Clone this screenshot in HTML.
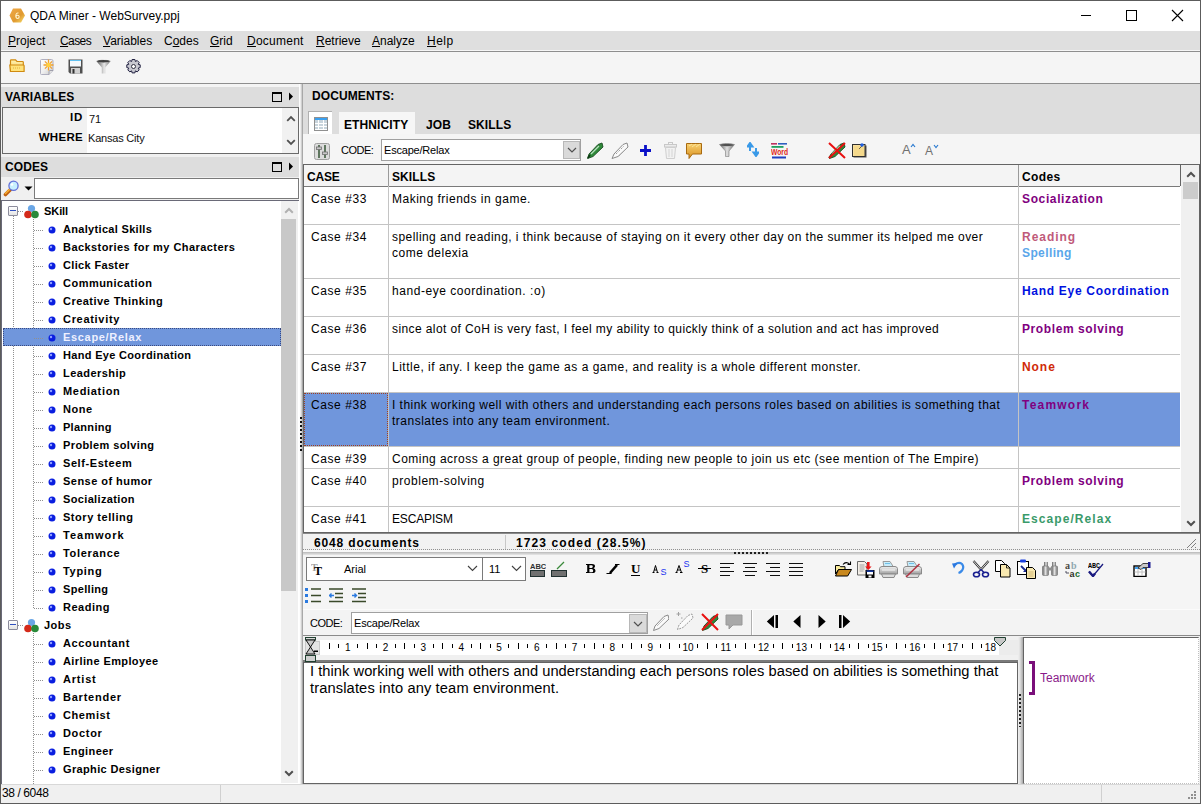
<!DOCTYPE html>
<html><head><meta charset="utf-8">
<style>
*{margin:0;padding:0;box-sizing:border-box}
html,body{width:1201px;height:804px;overflow:hidden;background:#f0f0f0;font-family:"Liberation Sans",sans-serif;color:#000}
.a{position:absolute}
.t{position:absolute;white-space:pre;line-height:1}
.hdt{position:absolute;font-weight:bold;font-size:12px;letter-spacing:0.1px;line-height:1;white-space:pre}
.mi{position:absolute;top:35px;font-size:12px;line-height:1;white-space:pre;color:#000}
.ul{text-decoration:underline;text-underline-offset:1px}
.tr{position:absolute;font-weight:bold;font-size:11px;letter-spacing:0.45px;line-height:1;white-space:pre;color:#000}
.gc{position:absolute;font-size:12px;letter-spacing:0.42px;line-height:16px;white-space:pre;color:#000}
.cc{position:absolute;font-weight:bold;font-size:12px;letter-spacing:0.5px;line-height:16px;white-space:pre}
</style></head><body>
<div class="a" style="left:0px;top:0px;width:1201px;height:804px;border:1px solid #5c5c5c"></div>
<div class="a" style="left:1px;top:1px;width:1199px;height:30px;background:#fff"></div>
<svg class="a" style="left:9px;top:8px" width="17" height="15" viewBox="0 0 17 15"><defs><linearGradient id="hx" x1="0" y1="0" x2="1" y2="1"><stop offset="0" stop-color="#f0a848"/><stop offset=".6" stop-color="#e09a30"/><stop offset="1" stop-color="#f8e070"/></linearGradient></defs><polygon points="4,0.5 12,0.5 16,7.5 12,14.5 4,14.5 0.5,7.5" fill="url(#hx)"/><path d="M9.5 5Q7 4.5 6.8 8Q7 10.5 8.5 10.5Q10.2 10.5 10.2 8.8Q10 7.2 8.5 7.3Q7.3 7.4 7 8.5" fill="none" stroke="#fff4d0" stroke-width="1.1"/></svg>
<div class="t" style="left:30px;top:10px;font-size:12px">QDA Miner - WebSurvey.ppj</div>
<div class="a" style="left:1081px;top:15px;width:10px;height:1px;background:#000"></div>
<div class="a" style="left:1126px;top:10px;width:11px;height:11px;border:1px solid #000"></div>
<svg class="a" style="left:1171px;top:9px" width="13" height="13" viewBox="0 0 13 13"><path d="M1 1L12 12M12 1L1 12" stroke="#000" stroke-width="1.1"/></svg>
<div class="a" style="left:1px;top:31px;width:1199px;height:19px;background:#dfdfdf"></div>
<div class="a" style="left:1px;top:50px;width:1199px;height:1px;background:#f6f6f6"></div>
<div class="a" style="left:1px;top:51px;width:1199px;height:1px;background:#8e8e8e"></div>
<div class="mi" style="left:8px"><span class="ul">P</span>roject</div>
<div class="mi" style="left:60px"><span class="ul" style="letter-spacing:-0.6px">C</span><span style="letter-spacing:-0.6px">ases</span></div>
<div class="mi" style="left:103px"><span class="ul">V</span>ariables</div>
<div class="mi" style="left:164px">C<span class="ul">o</span>des</div>
<div class="mi" style="left:210px"><span class="ul">G</span>rid</div>
<div class="mi" style="left:247px"><span class="ul" style="letter-spacing:0.25px">D</span><span style="letter-spacing:0.25px">ocument</span></div>
<div class="mi" style="left:316px"><span class="ul">R</span>etrieve</div>
<div class="mi" style="left:372px"><span class="ul">A</span>nalyze</div>
<div class="mi" style="left:427px"><span class="ul" style="letter-spacing:0.5px">H</span><span style="letter-spacing:0.5px">elp</span></div>
<div class="a" style="left:1px;top:52px;width:1199px;height:31px;background:#f5f5f5"></div>
<div class="a" style="left:1px;top:83px;width:1199px;height:1px;background:#8e8e8e"></div>
<div class="a" style="left:1px;top:84px;width:1199px;height:3px;background:#f4f4f4"></div>
<svg class="a" style="left:9px;top:59px" width="16" height="14" viewBox="0 0 16 14"><defs><linearGradient id="fo1" x1="0" y1="0" x2="0" y2="1"><stop offset="0" stop-color="#fff2b0"/><stop offset="1" stop-color="#f6cc60"/></linearGradient></defs><path d="M1.5 1.5Q1.5 0.8 2.2 0.8h4.3l1.5 1.7h5.5q.8 0 .8 .8V12.5H1.5z" fill="url(#fo1)" stroke="#d08a10" stroke-width="1.2"/><path d="M0.8 6h13.5q.8 0 .8 .8v5.7H1.5z" fill="#ffe27a" stroke="#d08a10" stroke-width="1.2"/><path d="M4 9h7" stroke="#e0b040" stroke-dasharray="1 1"/></svg>
<svg class="a" style="left:40px;top:59px" width="14" height="16" viewBox="0 0 14 16"><defs><linearGradient id="nd1" x1="0" y1="0" x2="1" y2="1"><stop offset="0" stop-color="#fff"/><stop offset=".5" stop-color="#f0f0f0"/><stop offset="1" stop-color="#c8c8c8"/></linearGradient></defs><path d="M1.5 0.5h10q1.5 0 1.5 1.5v9.5l-4 4H1.5q-1 0-1-1V1.5q0-1 1-1z" fill="url(#nd1)" stroke="#b0b0c0"/><path d="M13 11.5h-3q-1 0-1 1v3" fill="#e0e0e0" stroke="#9090a0" stroke-width=".8"/><g transform="translate(8.5,6)" stroke="#f0a030" stroke-width="1.3"><path d="M0 -5.5V5.5M-5 0H5M-3.6 -3.6L3.6 3.6M3.6 -3.6L-3.6 3.6"/></g><circle cx="8.5" cy="6" r="2.3" fill="#ffd040"/></svg>
<svg class="a" style="left:68px;top:59px" width="15" height="15" viewBox="0 0 15 15"><path d="M0.5 0.5h14v14H2L0.5 13z" fill="#505050"/><rect x="2" y="1" width="11" height="6.5" fill="#f4f8fb"/><rect x="2" y="1" width="11" height="1" fill="#60c0f0"/><rect x="3" y="9" width="9" height="5.5" fill="#d0d0d0"/><rect x="4.5" y="10" width="2" height="4.5" fill="#303030"/></svg>
<svg class="a" style="left:96px;top:59px" width="15" height="15" viewBox="0 0 15 15"><defs><linearGradient id="fn2" x1="0" y1="0" x2="1" y2="0"><stop offset="0" stop-color="#505050"/><stop offset=".55" stop-color="#e8e8e8"/><stop offset="1" stop-color="#707070"/></linearGradient></defs><path d="M0.3 2Q7.5 -1 14.7 2L9.3 8.5v6H5.8v-6z" fill="url(#fn2)"/><ellipse cx="7.5" cy="2.2" rx="6" ry="1.3" fill="#404040"/></svg>
<svg class="a" style="left:126px;top:59px" width="15" height="15" viewBox="0 0 15 15"><g transform="translate(7.5,7.5)"><path d="M-1.4 -7h2.8l.5 2 1.8 -1 2 2 -1 1.8 2 .5v2.8l-2 .5 1 1.8 -2 2 -1.8 -1 -.5 2h-2.8l-.5 -2 -1.8 1 -2 -2 1 -1.8 -2 -.5v-2.8l2 -.5 -1 -1.8 2 -2 1.8 1z" fill="#c8c8d0" stroke="#202040" stroke-width="1"/><circle r="2" fill="#fff" stroke="#303040" stroke-width="1"/></g></svg>
<div class="a" style="left:1px;top:87px;width:298px;height:697px;background:#f0f0f0"></div>
<div class="a" style="left:1px;top:87px;width:298px;height:20px;background:#dddddd"></div>
<div class="hdt" style="left:5px;top:91px">VARIABLES</div>
<div class="a" style="left:272px;top:92px;width:10px;height:10px;border:1px solid #000;border-top-width:2px"></div>
<svg class="a" style="left:288px;top:92px" width="6" height="9" viewBox="0 0 6 9"><polygon points="1,0.5 5,4.5 1,8.5" fill="#000"/></svg>
<div class="a" style="left:2px;top:107px;width:297px;height:47px;border:1px solid #6a6a6a;background:#fff"></div>
<div class="a" style="left:3px;top:108px;width:84px;height:45px;background:#f1f1f1"></div>
<div class="a" style="left:282px;top:108px;width:16px;height:45px;background:#f1f1f1"></div>
<svg class="a" style="left:286px;top:114px" width="10" height="8" viewBox="0 0 10 8"><path d="M1.2 6.8L5 3L8.8 6.8" fill="none" stroke="#505050" stroke-width="1.8"/></svg>
<svg class="a" style="left:286px;top:139px" width="10" height="8" viewBox="0 0 10 8"><path d="M1.2 1.2L5 5L8.8 1.2" fill="none" stroke="#505050" stroke-width="1.8"/></svg>
<div class="hdt" style="left:20px;width:63px;text-align:right;top:112px;font-size:11.5px;letter-spacing:0.8px">ID</div>
<div class="hdt" style="left:20px;width:63px;text-align:right;top:132px;font-size:11.5px;letter-spacing:0.3px">WHERE</div>
<div class="t" style="left:89px;top:114px;font-size:11px;color:#101010">71</div>
<div class="t" style="left:88px;top:133px;font-size:11px;color:#101010;letter-spacing:-0.2px">Kansas City</div>
<div class="a" style="left:1px;top:157px;width:298px;height:20px;background:#dddddd"></div>
<div class="hdt" style="left:5px;top:161px">CODES</div>
<div class="a" style="left:272px;top:162px;width:10px;height:10px;border:1px solid #000;border-top-width:2px"></div>
<svg class="a" style="left:288px;top:162px" width="6" height="9" viewBox="0 0 6 9"><polygon points="1,0.5 5,4.5 1,8.5" fill="#000"/></svg>
<svg class="a" style="left:3px;top:180px" width="17" height="17" viewBox="0 0 17 17"><path d="M8 9L2.5 14.5" stroke="#c06010" stroke-width="3.6" stroke-linecap="round"/><path d="M7.5 8.5L2.5 13.5" stroke="#f8b030" stroke-width="1.6" stroke-linecap="round" stroke-dasharray="1 1"/><circle cx="10.5" cy="5.8" r="4.6" fill="#c8f0ff" stroke="#6270d8" stroke-width="1.3"/><circle cx="9" cy="4.5" r="1.3" fill="#fff"/></svg>
<svg class="a" style="left:24px;top:186px" width="9" height="5" viewBox="0 0 9 5"><polygon points="0.5,0.5 8.5,0.5 4.5,4.5" fill="#000"/></svg>
<div class="a" style="left:34px;top:178px;width:265px;height:21px;border:1px solid #7a7a7a;background:#fff"></div>
<div class="a" style="left:1px;top:200px;width:298px;height:584px;border-top:1px solid #6a6a78;border-left:1px solid #6a6a78;background:#fff"></div>
<div class="a" style="left:281px;top:201px;width:17px;height:582px;background:#f0f0f0"></div>
<div class="a" style="left:281px;top:219px;width:15px;height:372px;background:#c8c8c8"></div>
<svg class="a" style="left:284px;top:206px" width="10" height="8" viewBox="0 0 10 8"><path d="M1.2 6.8L5 3L8.8 6.8" fill="none" stroke="#b0b0b0" stroke-width="2"/></svg>
<svg class="a" style="left:284px;top:770px" width="10" height="8" viewBox="0 0 10 8"><path d="M1.2 1.2L5 5L8.8 1.2" fill="none" stroke="#505050" stroke-width="2"/></svg>
<div class="a" style="left:13px;top:216px;width:1px;height:408px;background-image:linear-gradient(#909090 50%,transparent 50%);background-size:1px 2px;"></div>
<div class="a" style="left:33px;top:219px;width:1px;height:389px;background-image:linear-gradient(#909090 50%,transparent 50%);background-size:1px 2px;"></div>
<div class="a" style="left:33px;top:633px;width:1px;height:151px;background-image:linear-gradient(#909090 50%,transparent 50%);background-size:1px 2px;"></div>
<div class="a" style="left:18px;top:211px;width:6px;height:1px;background-image:linear-gradient(90deg,#909090 50%,transparent 50%);background-size:2px 1px;"></div>
<div class="a" style="left:8px;top:206px;width:10px;height:10px;border:1px solid #8c8c9c;background:linear-gradient(#fff,#e4e4e4);border-radius:1px"></div>
<div class="a" style="left:10px;top:210px;width:6px;height:1px;background:#3050c0"></div>
<svg class="a" style="left:24px;top:204px" width="15" height="15" viewBox="0 0 15 15"><circle cx="7.5" cy="4.5" r="3.6" fill="#6aa6e6"/><circle cx="4" cy="10.5" r="3.8" fill="#d42a1a"/><circle cx="11" cy="10.5" r="3.8" fill="#2a8a3a"/></svg>
<div class="tr" style="left:44px;top:206px;letter-spacing:-0.075px">SKill</div>
<div class="a" style="left:34px;top:230px;width:9px;height:1px;background-image:linear-gradient(90deg,#909090 50%,transparent 50%);background-size:2px 1px;"></div>
<svg class="a" style="left:48px;top:226px" width="8" height="8" viewBox="0 0 8 8"><circle cx="4" cy="4" r="3.5" fill="#0a1ee0"/><circle cx="3" cy="3" r="1.2" fill="#8fa0ff"/></svg>
<div class="tr" style="left:63px;top:224px;color:#000;letter-spacing:0.316px">Analytical Skills</div>
<div class="a" style="left:34px;top:248px;width:9px;height:1px;background-image:linear-gradient(90deg,#909090 50%,transparent 50%);background-size:2px 1px;"></div>
<svg class="a" style="left:48px;top:244px" width="8" height="8" viewBox="0 0 8 8"><circle cx="4" cy="4" r="3.5" fill="#0a1ee0"/><circle cx="3" cy="3" r="1.2" fill="#8fa0ff"/></svg>
<div class="tr" style="left:63px;top:242px;color:#000;letter-spacing:0.436px">Backstories for my Characters</div>
<div class="a" style="left:34px;top:266px;width:9px;height:1px;background-image:linear-gradient(90deg,#909090 50%,transparent 50%);background-size:2px 1px;"></div>
<svg class="a" style="left:48px;top:262px" width="8" height="8" viewBox="0 0 8 8"><circle cx="4" cy="4" r="3.5" fill="#0a1ee0"/><circle cx="3" cy="3" r="1.2" fill="#8fa0ff"/></svg>
<div class="tr" style="left:63px;top:260px;color:#000;letter-spacing:0.341px">Click Faster</div>
<div class="a" style="left:34px;top:284px;width:9px;height:1px;background-image:linear-gradient(90deg,#909090 50%,transparent 50%);background-size:2px 1px;"></div>
<svg class="a" style="left:48px;top:280px" width="8" height="8" viewBox="0 0 8 8"><circle cx="4" cy="4" r="3.5" fill="#0a1ee0"/><circle cx="3" cy="3" r="1.2" fill="#8fa0ff"/></svg>
<div class="tr" style="left:63px;top:278px;color:#000;letter-spacing:0.483px">Communication</div>
<div class="a" style="left:34px;top:302px;width:9px;height:1px;background-image:linear-gradient(90deg,#909090 50%,transparent 50%);background-size:2px 1px;"></div>
<svg class="a" style="left:48px;top:298px" width="8" height="8" viewBox="0 0 8 8"><circle cx="4" cy="4" r="3.5" fill="#0a1ee0"/><circle cx="3" cy="3" r="1.2" fill="#8fa0ff"/></svg>
<div class="tr" style="left:63px;top:296px;color:#000;letter-spacing:0.466px">Creative Thinking</div>
<div class="a" style="left:34px;top:320px;width:9px;height:1px;background-image:linear-gradient(90deg,#909090 50%,transparent 50%);background-size:2px 1px;"></div>
<svg class="a" style="left:48px;top:316px" width="8" height="8" viewBox="0 0 8 8"><circle cx="4" cy="4" r="3.5" fill="#0a1ee0"/><circle cx="3" cy="3" r="1.2" fill="#8fa0ff"/></svg>
<div class="tr" style="left:63px;top:314px;color:#000;letter-spacing:0.694px">Creativity</div>
<div class="a" style="left:3px;top:328px;width:278px;height:18px;background:#7096dc;border:1px dotted #3a4a80"></div>
<div class="a" style="left:34px;top:338px;width:9px;height:1px;background-image:linear-gradient(90deg,#909090 50%,transparent 50%);background-size:2px 1px;"></div>
<svg class="a" style="left:48px;top:334px" width="8" height="8" viewBox="0 0 8 8"><circle cx="4" cy="4" r="3.5" fill="#0a1ee0"/><circle cx="3" cy="3" r="1.2" fill="#8fa0ff"/></svg>
<div class="tr" style="left:63px;top:332px;color:#eef0ff;letter-spacing:0.673px">Escape/Relax</div>
<div class="a" style="left:34px;top:356px;width:9px;height:1px;background-image:linear-gradient(90deg,#909090 50%,transparent 50%);background-size:2px 1px;"></div>
<svg class="a" style="left:48px;top:352px" width="8" height="8" viewBox="0 0 8 8"><circle cx="4" cy="4" r="3.5" fill="#0a1ee0"/><circle cx="3" cy="3" r="1.2" fill="#8fa0ff"/></svg>
<div class="tr" style="left:63px;top:350px;color:#000;letter-spacing:0.320px">Hand Eye Coordination</div>
<div class="a" style="left:34px;top:374px;width:9px;height:1px;background-image:linear-gradient(90deg,#909090 50%,transparent 50%);background-size:2px 1px;"></div>
<svg class="a" style="left:48px;top:370px" width="8" height="8" viewBox="0 0 8 8"><circle cx="4" cy="4" r="3.5" fill="#0a1ee0"/><circle cx="3" cy="3" r="1.2" fill="#8fa0ff"/></svg>
<div class="tr" style="left:63px;top:368px;color:#000;letter-spacing:0.450px">Leadership</div>
<div class="a" style="left:34px;top:392px;width:9px;height:1px;background-image:linear-gradient(90deg,#909090 50%,transparent 50%);background-size:2px 1px;"></div>
<svg class="a" style="left:48px;top:388px" width="8" height="8" viewBox="0 0 8 8"><circle cx="4" cy="4" r="3.5" fill="#0a1ee0"/><circle cx="3" cy="3" r="1.2" fill="#8fa0ff"/></svg>
<div class="tr" style="left:63px;top:386px;color:#000;letter-spacing:0.681px">Mediation</div>
<div class="a" style="left:34px;top:410px;width:9px;height:1px;background-image:linear-gradient(90deg,#909090 50%,transparent 50%);background-size:2px 1px;"></div>
<svg class="a" style="left:48px;top:406px" width="8" height="8" viewBox="0 0 8 8"><circle cx="4" cy="4" r="3.5" fill="#0a1ee0"/><circle cx="3" cy="3" r="1.2" fill="#8fa0ff"/></svg>
<div class="tr" style="left:63px;top:404px;color:#000;letter-spacing:0.533px">None</div>
<div class="a" style="left:34px;top:428px;width:9px;height:1px;background-image:linear-gradient(90deg,#909090 50%,transparent 50%);background-size:2px 1px;"></div>
<svg class="a" style="left:48px;top:424px" width="8" height="8" viewBox="0 0 8 8"><circle cx="4" cy="4" r="3.5" fill="#0a1ee0"/><circle cx="3" cy="3" r="1.2" fill="#8fa0ff"/></svg>
<div class="tr" style="left:63px;top:422px;color:#000;letter-spacing:0.286px">Planning</div>
<div class="a" style="left:34px;top:446px;width:9px;height:1px;background-image:linear-gradient(90deg,#909090 50%,transparent 50%);background-size:2px 1px;"></div>
<svg class="a" style="left:48px;top:442px" width="8" height="8" viewBox="0 0 8 8"><circle cx="4" cy="4" r="3.5" fill="#0a1ee0"/><circle cx="3" cy="3" r="1.2" fill="#8fa0ff"/></svg>
<div class="tr" style="left:63px;top:440px;color:#000;letter-spacing:0.386px">Problem solving</div>
<div class="a" style="left:34px;top:464px;width:9px;height:1px;background-image:linear-gradient(90deg,#909090 50%,transparent 50%);background-size:2px 1px;"></div>
<svg class="a" style="left:48px;top:460px" width="8" height="8" viewBox="0 0 8 8"><circle cx="4" cy="4" r="3.5" fill="#0a1ee0"/><circle cx="3" cy="3" r="1.2" fill="#8fa0ff"/></svg>
<div class="tr" style="left:63px;top:458px;color:#000;letter-spacing:0.580px">Self-Esteem</div>
<div class="a" style="left:34px;top:482px;width:9px;height:1px;background-image:linear-gradient(90deg,#909090 50%,transparent 50%);background-size:2px 1px;"></div>
<svg class="a" style="left:48px;top:478px" width="8" height="8" viewBox="0 0 8 8"><circle cx="4" cy="4" r="3.5" fill="#0a1ee0"/><circle cx="3" cy="3" r="1.2" fill="#8fa0ff"/></svg>
<div class="tr" style="left:63px;top:476px;color:#000;letter-spacing:0.462px">Sense of humor</div>
<div class="a" style="left:34px;top:500px;width:9px;height:1px;background-image:linear-gradient(90deg,#909090 50%,transparent 50%);background-size:2px 1px;"></div>
<svg class="a" style="left:48px;top:496px" width="8" height="8" viewBox="0 0 8 8"><circle cx="4" cy="4" r="3.5" fill="#0a1ee0"/><circle cx="3" cy="3" r="1.2" fill="#8fa0ff"/></svg>
<div class="tr" style="left:63px;top:494px;color:#000;letter-spacing:0.354px">Socialization</div>
<div class="a" style="left:34px;top:518px;width:9px;height:1px;background-image:linear-gradient(90deg,#909090 50%,transparent 50%);background-size:2px 1px;"></div>
<svg class="a" style="left:48px;top:514px" width="8" height="8" viewBox="0 0 8 8"><circle cx="4" cy="4" r="3.5" fill="#0a1ee0"/><circle cx="3" cy="3" r="1.2" fill="#8fa0ff"/></svg>
<div class="tr" style="left:63px;top:512px;color:#000;letter-spacing:0.533px">Story telling</div>
<div class="a" style="left:34px;top:536px;width:9px;height:1px;background-image:linear-gradient(90deg,#909090 50%,transparent 50%);background-size:2px 1px;"></div>
<svg class="a" style="left:48px;top:532px" width="8" height="8" viewBox="0 0 8 8"><circle cx="4" cy="4" r="3.5" fill="#0a1ee0"/><circle cx="3" cy="3" r="1.2" fill="#8fa0ff"/></svg>
<div class="tr" style="left:63px;top:530px;color:#000;letter-spacing:1.007px">Teamwork</div>
<div class="a" style="left:34px;top:554px;width:9px;height:1px;background-image:linear-gradient(90deg,#909090 50%,transparent 50%);background-size:2px 1px;"></div>
<svg class="a" style="left:48px;top:550px" width="8" height="8" viewBox="0 0 8 8"><circle cx="4" cy="4" r="3.5" fill="#0a1ee0"/><circle cx="3" cy="3" r="1.2" fill="#8fa0ff"/></svg>
<div class="tr" style="left:63px;top:548px;color:#000;letter-spacing:0.681px">Tolerance</div>
<div class="a" style="left:34px;top:572px;width:9px;height:1px;background-image:linear-gradient(90deg,#909090 50%,transparent 50%);background-size:2px 1px;"></div>
<svg class="a" style="left:48px;top:568px" width="8" height="8" viewBox="0 0 8 8"><circle cx="4" cy="4" r="3.5" fill="#0a1ee0"/><circle cx="3" cy="3" r="1.2" fill="#8fa0ff"/></svg>
<div class="tr" style="left:63px;top:566px;color:#000;letter-spacing:0.690px">Typing</div>
<div class="a" style="left:34px;top:590px;width:9px;height:1px;background-image:linear-gradient(90deg,#909090 50%,transparent 50%);background-size:2px 1px;"></div>
<svg class="a" style="left:48px;top:586px" width="8" height="8" viewBox="0 0 8 8"><circle cx="4" cy="4" r="3.5" fill="#0a1ee0"/><circle cx="3" cy="3" r="1.2" fill="#8fa0ff"/></svg>
<div class="tr" style="left:63px;top:584px;color:#000;letter-spacing:0.321px">Spelling</div>
<div class="a" style="left:34px;top:608px;width:9px;height:1px;background-image:linear-gradient(90deg,#909090 50%,transparent 50%);background-size:2px 1px;"></div>
<svg class="a" style="left:48px;top:604px" width="8" height="8" viewBox="0 0 8 8"><circle cx="4" cy="4" r="3.5" fill="#0a1ee0"/><circle cx="3" cy="3" r="1.2" fill="#8fa0ff"/></svg>
<div class="tr" style="left:63px;top:602px;color:#000;letter-spacing:0.517px">Reading</div>
<div class="a" style="left:18px;top:625px;width:6px;height:1px;background-image:linear-gradient(90deg,#909090 50%,transparent 50%);background-size:2px 1px;"></div>
<div class="a" style="left:8px;top:620px;width:10px;height:10px;border:1px solid #8c8c9c;background:linear-gradient(#fff,#e4e4e4);border-radius:1px"></div>
<div class="a" style="left:10px;top:624px;width:6px;height:1px;background:#3050c0"></div>
<svg class="a" style="left:24px;top:618px" width="15" height="15" viewBox="0 0 15 15"><circle cx="7.5" cy="4.5" r="3.6" fill="#6aa6e6"/><circle cx="4" cy="10.5" r="3.8" fill="#d42a1a"/><circle cx="11" cy="10.5" r="3.8" fill="#2a8a3a"/></svg>
<div class="tr" style="left:44px;top:620px;letter-spacing:0.483px">Jobs</div>
<div class="a" style="left:34px;top:644px;width:9px;height:1px;background-image:linear-gradient(90deg,#909090 50%,transparent 50%);background-size:2px 1px;"></div>
<svg class="a" style="left:48px;top:640px" width="8" height="8" viewBox="0 0 8 8"><circle cx="4" cy="4" r="3.5" fill="#0a1ee0"/><circle cx="3" cy="3" r="1.2" fill="#8fa0ff"/></svg>
<div class="tr" style="left:63px;top:638px;color:#000;letter-spacing:0.644px">Accountant</div>
<div class="a" style="left:34px;top:662px;width:9px;height:1px;background-image:linear-gradient(90deg,#909090 50%,transparent 50%);background-size:2px 1px;"></div>
<svg class="a" style="left:48px;top:658px" width="8" height="8" viewBox="0 0 8 8"><circle cx="4" cy="4" r="3.5" fill="#0a1ee0"/><circle cx="3" cy="3" r="1.2" fill="#8fa0ff"/></svg>
<div class="tr" style="left:63px;top:656px;color:#000;letter-spacing:0.390px">Airline Employee</div>
<div class="a" style="left:34px;top:680px;width:9px;height:1px;background-image:linear-gradient(90deg,#909090 50%,transparent 50%);background-size:2px 1px;"></div>
<svg class="a" style="left:48px;top:676px" width="8" height="8" viewBox="0 0 8 8"><circle cx="4" cy="4" r="3.5" fill="#0a1ee0"/><circle cx="3" cy="3" r="1.2" fill="#8fa0ff"/></svg>
<div class="tr" style="left:63px;top:674px;color:#000;letter-spacing:0.810px">Artist</div>
<div class="a" style="left:34px;top:698px;width:9px;height:1px;background-image:linear-gradient(90deg,#909090 50%,transparent 50%);background-size:2px 1px;"></div>
<svg class="a" style="left:48px;top:694px" width="8" height="8" viewBox="0 0 8 8"><circle cx="4" cy="4" r="3.5" fill="#0a1ee0"/><circle cx="3" cy="3" r="1.2" fill="#8fa0ff"/></svg>
<div class="tr" style="left:63px;top:692px;color:#000;letter-spacing:0.763px">Bartender</div>
<div class="a" style="left:34px;top:716px;width:9px;height:1px;background-image:linear-gradient(90deg,#909090 50%,transparent 50%);background-size:2px 1px;"></div>
<svg class="a" style="left:48px;top:712px" width="8" height="8" viewBox="0 0 8 8"><circle cx="4" cy="4" r="3.5" fill="#0a1ee0"/><circle cx="3" cy="3" r="1.2" fill="#8fa0ff"/></svg>
<div class="tr" style="left:63px;top:710px;color:#000;letter-spacing:0.600px">Chemist</div>
<div class="a" style="left:34px;top:734px;width:9px;height:1px;background-image:linear-gradient(90deg,#909090 50%,transparent 50%);background-size:2px 1px;"></div>
<svg class="a" style="left:48px;top:730px" width="8" height="8" viewBox="0 0 8 8"><circle cx="4" cy="4" r="3.5" fill="#0a1ee0"/><circle cx="3" cy="3" r="1.2" fill="#8fa0ff"/></svg>
<div class="tr" style="left:63px;top:728px;color:#000;letter-spacing:0.680px">Doctor</div>
<div class="a" style="left:34px;top:752px;width:9px;height:1px;background-image:linear-gradient(90deg,#909090 50%,transparent 50%);background-size:2px 1px;"></div>
<svg class="a" style="left:48px;top:748px" width="8" height="8" viewBox="0 0 8 8"><circle cx="4" cy="4" r="3.5" fill="#0a1ee0"/><circle cx="3" cy="3" r="1.2" fill="#8fa0ff"/></svg>
<div class="tr" style="left:63px;top:746px;color:#000;letter-spacing:0.429px">Engineer</div>
<div class="a" style="left:34px;top:770px;width:9px;height:1px;background-image:linear-gradient(90deg,#909090 50%,transparent 50%);background-size:2px 1px;"></div>
<svg class="a" style="left:48px;top:766px" width="8" height="8" viewBox="0 0 8 8"><circle cx="4" cy="4" r="3.5" fill="#0a1ee0"/><circle cx="3" cy="3" r="1.2" fill="#8fa0ff"/></svg>
<div class="tr" style="left:63px;top:764px;color:#000;letter-spacing:0.357px">Graphic Designer</div>
<div class="a" style="left:299px;top:84px;width:1px;height:700px;background:#fdfdfd"></div>
<div class="a" style="left:300px;top:84px;width:1px;height:700px;background:#ececec"></div>
<div class="a" style="left:301px;top:84px;width:1px;height:700px;background:#d0d0d0"></div>
<div class="a" style="left:302px;top:84px;width:1px;height:700px;background:#a8a8a8"></div>
<div class="a" style="left:303px;top:84px;width:897px;height:50px;background:#dddddd"></div>
<div class="hdt" style="left:312px;top:90px">DOCUMENTS:</div>
<div class="a" style="left:308px;top:111px;width:24px;height:23px;background:#fff;border-top:1px solid #b0b0b0;border-left:1px solid #b0b0b0"></div>
<svg class="a" style="left:314px;top:117px" width="14" height="14" viewBox="0 0 14 14"><rect x="0" y="0" width="14" height="3" fill="#3aa0f0"/><rect x="0" y="3" width="14" height="11" fill="#c8d4dc"/><path d="M0 6.5h14M0 9.5h14M0 12.5h14M4.5 3v11M9.5 3v11" stroke="#fff" stroke-width="1"/><rect x="0.5" y="0.5" width="13" height="13" fill="none" stroke="#909090"/></svg>
<div class="a" style="left:339px;top:112px;width:76px;height:22px;background:#f6f6f6"></div>
<div class="hdt" style="left:344px;top:119px">ETHNICITY</div>
<div class="hdt" style="left:426px;top:119px">JOB</div>
<div class="hdt" style="left:468px;top:119px">SKILLS</div>
<div class="a" style="left:303px;top:134px;width:897px;height:30px;background:#f5f5f5"></div>
<svg class="a" style="left:314px;top:143px" width="16" height="17" viewBox="0 0 16 17"><rect x="0.5" y="0.5" width="15" height="16" rx="2" fill="#dcdcdc" stroke="#a0a0a0"/><path d="M5 2v13M11 2v13" stroke="#2a4a2a" stroke-width="1.4"/><rect x="2.5" y="4" width="5" height="2.5" fill="#c8c8c8" stroke="#707070" stroke-width=".8"/><rect x="8.5" y="9" width="5" height="2.5" fill="#c8c8c8" stroke="#707070" stroke-width=".8"/></svg>
<div class="t" style="left:341px;top:145px;font-size:11px;letter-spacing:-0.5px">CODE:</div>
<div class="a" style="left:381px;top:139px;width:200px;height:22px;border:1px solid #a0a0a0;background:#fff"></div>
<div class="t" style="left:384px;top:145px;font-size:11px;letter-spacing:-0.2px">Escape/Relax</div>
<div class="a" style="left:563px;top:141px;width:17px;height:18px;background:#dadada;border:1px solid #b8b8b8"></div>
<svg class="a" style="left:567px;top:147px" width="10" height="6" viewBox="0 0 10 6"><path d="M1 1L5 5L9 1" fill="none" stroke="#505050" stroke-width="1.2"/></svg>
<svg class="a" style="left:587px;top:142px" width="17" height="17" viewBox="0 0 17 17"><path d="M0.5 16.5L2 12L11 2.5L15 1L16 5L6 14.5Z" fill="#2f8a3a" stroke="#1a4a20" stroke-width=".9"/><path d="M4 12L12 4" stroke="#b8e0c0" stroke-width="1.3"/><path d="M1 16L3 13" stroke="#0a3a10" stroke-width="1.5"/></svg>
<svg class="a" style="left:611px;top:142px" width="18" height="17" viewBox="0 0 18 17"><path d="M1 16.5L3 12L12 2.5L16 1L17 5L7 14.5Z" fill="#fafafa" stroke="#8a8a8a" stroke-width="1"/><path d="M5 12L13 4M8 14L16 6" stroke="#a0a0a0" stroke-width="1" stroke-dasharray="2 1.5"/></svg>
<svg class="a" style="left:640px;top:145px" width="11" height="11" viewBox="0 0 11 11"><path d="M5.5 0v11M0 5.5h11" stroke="#0a10c8" stroke-width="2.8"/></svg>
<svg class="a" style="left:664px;top:142px" width="13" height="17" viewBox="0 0 13 17"><rect x="4.5" y="0.5" width="4" height="2" fill="none" stroke="#c8c8c8"/><rect x="0.5" y="2.5" width="12" height="2.5" fill="#ececec" stroke="#c8c8c8"/><path d="M1.5 5.5h10l-1 11h-8z" fill="#f2f2f2" stroke="#cfcfcf"/><path d="M5 7v8M8 7v8" stroke="#d4d4d4"/></svg>
<svg class="a" style="left:686px;top:143px" width="16" height="16" viewBox="0 0 16 16"><defs><linearGradient id="bg1" x1="0" y1="0" x2="0" y2="1"><stop offset="0" stop-color="#f8d070"/><stop offset="1" stop-color="#d89020"/></linearGradient></defs><path d="M0.5 0.5h15v10.5H6.5L3 15.5v-4.5H0.5z" fill="url(#bg1)" stroke="#a86a10"/><path d="M3 3l3-2M6 4l4-3M10 4l4-3" stroke="#fff0b0" stroke-width="1" opacity=".7"/></svg>
<svg class="a" style="left:719px;top:143px" width="16" height="14" viewBox="0 0 16 14"><defs><linearGradient id="fn1" x1="0" y1="0" x2="1" y2="0"><stop offset="0" stop-color="#606060"/><stop offset=".5" stop-color="#e0e0e0"/><stop offset="1" stop-color="#707070"/></linearGradient></defs><path d="M0.5 1.5Q8 -1 15.5 1.5L10 8v5.5H6.5V8z" fill="url(#fn1)" stroke="#808080" stroke-width=".6"/><ellipse cx="8" cy="2" rx="6.5" ry="1.2" fill="#505050"/></svg>
<svg class="a" style="left:747px;top:142px" width="12" height="15" viewBox="0 0 12 15"><path d="M3 9V3.5M0.5 4.5L3 1L5.5 4.5z" stroke="#3a9ae8" stroke-width="2" fill="#3a9ae8"/><path d="M9 6v5.5M6.5 10.5L9 14L11.5 10.5z" stroke="#3a9ae8" stroke-width="2" fill="#3a9ae8"/></svg>
<svg class="a" style="left:771px;top:142px" width="17" height="17" viewBox="0 0 17 17"><rect x="0" y="1" width="6" height="1.6" fill="#c03060"/><rect x="7" y="1" width="9" height="1.6" fill="#3060c0"/><rect x="0.5" y="4" width="12" height="1.8" fill="#20a060"/><text x="0" y="13" font-size="8.5" font-weight="bold" font-family="Liberation Sans" fill="#e02818" textLength="17" lengthAdjust="spacingAndGlyphs">Word</text><rect x="1" y="14.5" width="14" height="2" fill="#2040c0"/></svg>
<svg class="a" style="left:828px;top:142px" width="18" height="17" viewBox="0 0 18 17"><path d="M0.5 16.5L2 12L11 2.5L15 1L16 5L6 14.5Z" fill="#2f8a3a" transform="translate(1,0)" stroke="#1a4a20" stroke-width=".9"/><path d="M4 12L12 4" stroke="#b8e0c0" stroke-width="1.3"/><path d="M1 16L3 13" stroke="#0a3a10" stroke-width="1.5"/><path d="M1 1L17 16M17 1L1 16" stroke="#e81010" stroke-width="2"/></svg>
<svg class="a" style="left:852px;top:143px" width="15" height="15" viewBox="0 0 15 15"><rect x="1.5" y="2.5" width="13" height="12" fill="#505050"/><rect x="0.5" y="1.5" width="12.5" height="12" fill="#f8e0a0" stroke="#303030"/><path d="M2 4h10M2 6h10M2 8h10M2 10h10M2 12h10" stroke="#f0d070" stroke-width=".8"/><path d="M7 6l3-3" stroke="#404040" stroke-width=".8"/><circle cx="10" cy="2" r="1.8" fill="#2060e0"/></svg>
<div class="t" style="left:902px;top:143px;font-size:13px;color:#707070">A</div>
<svg class="a" style="left:910px;top:143px" width="6" height="5" viewBox="0 0 6 5"><path d="M1 4L3 1.5L5 4" fill="none" stroke="#2a7ad0" stroke-width="1.2"/></svg>
<div class="t" style="left:925px;top:145px;font-size:12px;color:#707070">A</div>
<svg class="a" style="left:933px;top:144px" width="6" height="5" viewBox="0 0 6 5"><path d="M1 1L3 3.5L5 1" fill="none" stroke="#2a7ad0" stroke-width="1.2"/></svg>
<div class="a" style="left:303px;top:164px;width:897px;height:369px;border:1px solid #646464;background:#fff"></div>
<div class="a" style="left:304px;top:165px;width:876px;height:21px;background:#f4f4f4"></div>
<div class="a" style="left:304px;top:186px;width:876px;height:1px;background:#7a7a7a"></div>
<div class="a" style="left:388px;top:165px;width:1px;height:21px;background:#9a9a9a"></div>
<div class="a" style="left:1018px;top:165px;width:1px;height:21px;background:#9a9a9a"></div>
<div class="hdt" style="left:307px;top:171px;letter-spacing:-0.2px">CASE</div>
<div class="hdt" style="left:392px;top:171px">SKILLS</div>
<div class="hdt" style="left:1022px;top:171px;letter-spacing:0.4px">Codes</div>
<div class="a" style="left:304px;top:224px;width:876px;height:1px;background:#c4c4c4"></div>
<div class="a" style="left:388px;top:186px;width:1px;height:38px;background:#c4c4c4"></div>
<div class="a" style="left:1018px;top:186px;width:1px;height:38px;background:#c4c4c4"></div>
<div class="gc" style="left:311px;top:191px;letter-spacing:0.571px">Case #33</div>
<div class="gc" style="left:392px;top:191px;letter-spacing:0.500px">Making friends in game.</div>
<div class="cc" style="left:1022px;top:191px;color:#800080;letter-spacing:0.629px">Socialization</div>
<div class="a" style="left:304px;top:278px;width:876px;height:1px;background:#c4c4c4"></div>
<div class="a" style="left:388px;top:224px;width:1px;height:54px;background:#c4c4c4"></div>
<div class="a" style="left:1018px;top:224px;width:1px;height:54px;background:#c4c4c4"></div>
<div class="gc" style="left:311px;top:229px;letter-spacing:0.571px">Case #34</div>
<div class="gc" style="left:392px;top:229px;letter-spacing:0.442px">spelling and reading, i think because of staying on it every other day on the summer its helped me over</div>
<div class="gc" style="left:392px;top:245px;letter-spacing:0.495px">come delexia</div>
<div class="cc" style="left:1022px;top:229px;color:#c05a7a;letter-spacing:0.975px">Reading</div>
<div class="cc" style="left:1022px;top:245px;color:#5aa6ea;letter-spacing:0.393px">Spelling</div>
<div class="a" style="left:304px;top:316px;width:876px;height:1px;background:#c4c4c4"></div>
<div class="a" style="left:388px;top:278px;width:1px;height:38px;background:#c4c4c4"></div>
<div class="a" style="left:1018px;top:278px;width:1px;height:38px;background:#c4c4c4"></div>
<div class="gc" style="left:311px;top:283px;letter-spacing:0.571px">Case #35</div>
<div class="gc" style="left:392px;top:283px;letter-spacing:0.548px">hand-eye coordination. :o)</div>
<div class="cc" style="left:1022px;top:283px;color:#0012e0;letter-spacing:0.703px">Hand Eye Coordination</div>
<div class="a" style="left:304px;top:354px;width:876px;height:1px;background:#c4c4c4"></div>
<div class="a" style="left:388px;top:316px;width:1px;height:38px;background:#c4c4c4"></div>
<div class="a" style="left:1018px;top:316px;width:1px;height:38px;background:#c4c4c4"></div>
<div class="gc" style="left:311px;top:321px;letter-spacing:0.571px">Case #36</div>
<div class="gc" style="left:392px;top:321px;letter-spacing:0.405px">since alot of CoH is very fast, I feel my ability to quickly think of a solution and act has improved</div>
<div class="cc" style="left:1022px;top:321px;color:#800080;letter-spacing:0.593px">Problem solving</div>
<div class="a" style="left:304px;top:392px;width:876px;height:1px;background:#c4c4c4"></div>
<div class="a" style="left:388px;top:354px;width:1px;height:38px;background:#c4c4c4"></div>
<div class="a" style="left:1018px;top:354px;width:1px;height:38px;background:#c4c4c4"></div>
<div class="gc" style="left:311px;top:359px;letter-spacing:0.571px">Case #37</div>
<div class="gc" style="left:392px;top:359px;letter-spacing:0.508px">Little, if any. I keep the game as a game, and reality is a whole different monster.</div>
<div class="cc" style="left:1022px;top:359px;color:#d02a08;letter-spacing:0.933px">None</div>
<div class="a" style="left:304px;top:393px;width:876px;height:53px;background:#7096dc"></div>
<div class="a" style="left:304px;top:393px;width:84px;height:53px;border:1px dotted #a04020"></div>
<div class="a" style="left:304px;top:446px;width:876px;height:1px;background:#c4c4c4"></div>
<div class="a" style="left:388px;top:392px;width:1px;height:54px;background:#c4c4c4"></div>
<div class="a" style="left:1018px;top:392px;width:1px;height:54px;background:#c4c4c4"></div>
<div class="gc" style="left:311px;top:397px;letter-spacing:0.571px">Case #38</div>
<div class="gc" style="left:392px;top:397px;letter-spacing:0.458px">I think working well with others and understanding each persons roles based on abilities is something that</div>
<div class="gc" style="left:392px;top:413px;letter-spacing:0.490px">translates into any team environment.</div>
<div class="cc" style="left:1022px;top:397px;color:#800080;letter-spacing:1.214px">Teamwork</div>
<div class="a" style="left:304px;top:468px;width:876px;height:1px;background:#c4c4c4"></div>
<div class="a" style="left:388px;top:446px;width:1px;height:22px;background:#c4c4c4"></div>
<div class="a" style="left:1018px;top:446px;width:1px;height:22px;background:#c4c4c4"></div>
<div class="gc" style="left:311px;top:451px;letter-spacing:0.571px">Case #39</div>
<div class="gc" style="left:392px;top:451px;letter-spacing:0.470px">Coming across a great group of people, finding new people to join us etc (see mention of The Empire)</div>
<div class="a" style="left:304px;top:506px;width:876px;height:1px;background:#c4c4c4"></div>
<div class="a" style="left:388px;top:468px;width:1px;height:38px;background:#c4c4c4"></div>
<div class="a" style="left:1018px;top:468px;width:1px;height:38px;background:#c4c4c4"></div>
<div class="gc" style="left:311px;top:473px;letter-spacing:0.571px">Case #40</div>
<div class="gc" style="left:392px;top:473px;letter-spacing:0.539px">problem-solving</div>
<div class="cc" style="left:1022px;top:473px;color:#800080;letter-spacing:0.593px">Problem solving</div>
<div class="a" style="left:388px;top:506px;width:1px;height:26px;background:#c4c4c4"></div>
<div class="a" style="left:1018px;top:506px;width:1px;height:26px;background:#c4c4c4"></div>
<div class="gc" style="left:311px;top:511px;letter-spacing:0.571px">Case #41</div>
<div class="gc" style="left:392px;top:511px;letter-spacing:-0.157px">ESCAPISM</div>
<div class="cc" style="left:1022px;top:511px;color:#3a9a6a;letter-spacing:1.064px">Escape/Relax</div>
<div class="a" style="left:1181px;top:165px;width:18px;height:367px;background:#f0f0f0"></div>
<div class="a" style="left:1180px;top:165px;width:1px;height:21px;background:#646464"></div>
<div class="a" style="left:1183px;top:182px;width:15px;height:17px;background:#cccccc"></div>
<svg class="a" style="left:1186px;top:170px" width="10" height="8" viewBox="0 0 10 8"><path d="M1.2 6.8L5 3L8.8 6.8" fill="none" stroke="#505050" stroke-width="2"/></svg>
<svg class="a" style="left:1186px;top:520px" width="10" height="8" viewBox="0 0 10 8"><path d="M1.2 1.2L5 5L8.8 1.2" fill="none" stroke="#505050" stroke-width="2"/></svg>
<div class="a" style="left:303px;top:533px;width:897px;height:16px;background:#f2f2f2"></div>
<div class="a" style="left:303px;top:533px;width:897px;height:1px;background:#8a8a8a"></div>
<div class="a" style="left:303px;top:549px;width:897px;height:1px;background-image:linear-gradient(90deg,#909090 50%,transparent 50%);background-size:2px 1px;"></div>
<div class="a" style="left:505px;top:535px;width:1px;height:14px;background:#c8c8c8"></div>
<div class="hdt" style="left:314px;top:537px;letter-spacing:0.84px">6048 documents</div>
<div class="hdt" style="left:516px;top:537px;letter-spacing:1.1px">1723 coded (28.5%)</div>
<svg class="a" style="left:1185px;top:537px" width="12" height="12" viewBox="0 0 12 12"><path d="M11 2L2 11M11 6L6 11M11 10L10 11" stroke="#808080" stroke-width="1"/></svg>
<div class="a" style="left:303px;top:550px;width:897px;height:2px;background:#f8f8f8"></div>
<div class="a" style="left:303px;top:552px;width:897px;height:3px;background:linear-gradient(#b8b8b8,#e8e8e8)"></div>
<div class="a" style="left:734px;top:552px;width:35px;height:2px;background-image:linear-gradient(90deg,#202020 50%,transparent 50%);background-size:4px 2px;"></div>
<div class="a" style="left:303px;top:555px;width:897px;height:54px;background:#f5f5f5"></div>
<div class="a" style="left:306px;top:557px;width:177px;height:24px;border:1px solid #7a7a7a;background:#fff"></div>
<svg class="a" style="left:311px;top:562px" width="14" height="14" viewBox="0 0 14 14"><text x="0" y="9" font-size="10" font-family="Liberation Serif" font-weight="bold" fill="#a0a0a0">T</text><text x="3" y="13" font-size="12" font-family="Liberation Serif" font-weight="bold" fill="#000">T</text></svg>
<div class="t" style="left:344px;top:564px;font-size:11px">Arial</div>
<svg class="a" style="left:467px;top:565px" width="11" height="7" viewBox="0 0 11 7"><path d="M1 1L5.5 5.5L10 1" fill="none" stroke="#404040" stroke-width="1.1"/></svg>
<div class="a" style="left:482px;top:557px;width:44px;height:24px;border:1px solid #7a7a7a;background:#fff"></div>
<div class="t" style="left:489px;top:564px;font-size:11px">11</div>
<svg class="a" style="left:511px;top:565px" width="11" height="7" viewBox="0 0 11 7"><path d="M1 1L5.5 5.5L10 1" fill="none" stroke="#404040" stroke-width="1.1"/></svg>
<svg class="a" style="left:530px;top:562px" width="16" height="16" viewBox="0 0 16 16"><text x="0" y="7" font-size="7.5" font-weight="bold" font-family="Liberation Sans" fill="#303030">ABC</text><rect x="0.5" y="8.5" width="14" height="6" fill="#707070" stroke="#203030"/></svg>
<svg class="a" style="left:551px;top:561px" width="17" height="17" viewBox="0 0 17 17"><path d="M6 8L13 1" stroke="#3a8a3a" stroke-width="1.2"/><rect x="0.5" y="9.5" width="15" height="6" fill="#707070" stroke="#203030"/></svg>
<svg class="a" style="left:586px;top:564px" width="10" height="9" viewBox="0 0 10 9"><path d="M0 0h6q3 0 3 2.2q0 1.6-1.6 2.1q2.1 .5 2.1 2.4q0 2.3-3 2.3H0v-1h1.2V1H0z" fill="#000"/><path d="M3.4 1.2h2q1.4 0 1.4 1.4t-1.4 1.3h-2zM3.4 5h2.2q1.6 0 1.6 1.7t-1.6 1.6H3.4z" fill="#f5f5f5"/></svg>
<svg class="a" style="left:606px;top:564px" width="14" height="10" viewBox="0 0 14 10"><path d="M4 9L11 1" stroke="#000" stroke-width="2.6"/><path d="M9 0.5h4.5M0.5 9.5h5" stroke="#000" stroke-width="1"/></svg>
<div class="t" style="left:631px;top:562px;font-size:13px;font-weight:bold;font-family:'Liberation Serif'">U</div>
<div class="a" style="left:631px;top:575px;width:9px;height:1px;background:#000"></div>
<svg class="a" style="left:652px;top:565px" width="7" height="8" viewBox="0 0 7 8"><path d="M0.5 7.5h2M4.5 7.5h2M1.5 7.5L3.5 0.5L5.5 7.5M2.2 5h2.6" fill="none" stroke="#000" stroke-width="1"/></svg>
<div class="t" style="left:660.5px;top:568px;font-size:9px;color:#1a30f0">S</div>
<svg class="a" style="left:675px;top:565px" width="8" height="8" viewBox="0 0 8 8"><path d="M0.5 7.5h2M5 7.5h2.5M1.5 7.5L4 0.5L6.5 7.5M2.3 5h3.4" fill="none" stroke="#000" stroke-width="1"/></svg>
<div class="t" style="left:683.5px;top:560px;font-size:9px;color:#1a30f0">S</div>
<div class="t" style="left:701px;top:562px;font-size:13px;font-weight:bold;font-family:'Liberation Serif'">S</div>
<div class="a" style="left:698px;top:568px;width:13px;height:1px;background:#000"></div>
<div class="a" style="left:720px;top:563px;width:14px;height:1px;background:#101010"></div>
<div class="a" style="left:720px;top:567px;width:10px;height:1px;background:#101010"></div>
<div class="a" style="left:720px;top:571px;width:14px;height:1px;background:#101010"></div>
<div class="a" style="left:720px;top:575px;width:10px;height:1px;background:#101010"></div>
<div class="a" style="left:743px;top:563px;width:14px;height:1px;background:#101010"></div>
<div class="a" style="left:745px;top:567px;width:10px;height:1px;background:#101010"></div>
<div class="a" style="left:743px;top:571px;width:14px;height:1px;background:#101010"></div>
<div class="a" style="left:745px;top:575px;width:10px;height:1px;background:#101010"></div>
<div class="a" style="left:766px;top:563px;width:14px;height:1px;background:#101010"></div>
<div class="a" style="left:770px;top:567px;width:10px;height:1px;background:#101010"></div>
<div class="a" style="left:766px;top:571px;width:14px;height:1px;background:#101010"></div>
<div class="a" style="left:770px;top:575px;width:10px;height:1px;background:#101010"></div>
<div class="a" style="left:789px;top:563px;width:14px;height:1px;background:#101010"></div>
<div class="a" style="left:789px;top:567px;width:14px;height:1px;background:#101010"></div>
<div class="a" style="left:789px;top:571px;width:14px;height:1px;background:#101010"></div>
<div class="a" style="left:789px;top:575px;width:14px;height:1px;background:#101010"></div>
<svg class="a" style="left:835px;top:561px" width="17" height="16" viewBox="0 0 17 16"><path d="M0.5 4.5h4l1 1.2h4.5v2.8H3.5L0.5 13z" fill="#f8ea9a" stroke="#000"/><path d="M3.5 8.5h13l-3.8 6.5H0.5z" fill="#c8881e" stroke="#000"/><path d="M8 3.5Q11 0 14.5 3" fill="none" stroke="#000" stroke-width="1.1"/><path d="M12.5 3.5h3v-3" fill="none" stroke="#000" stroke-width="1.1"/></svg>
<svg class="a" style="left:857px;top:561px" width="18" height="17" viewBox="0 0 18 17"><path d="M0.5 0.5h7l2.5 2.5v11H0.5z" fill="#f4efe8" stroke="#6a6a6a"/><path d="M2.5 4h5M2.5 6h5M2.5 8h5M2.5 10h4" stroke="#909090" stroke-width=".8"/><rect x="10" y="1" width="2.6" height="5" fill="#e81818"/><path d="M8 5.5h6.6L11.3 9z" fill="#e81818"/><rect x="8.5" y="9" width="9" height="8" fill="#000"/><rect x="9.5" y="9.5" width="7" height="1.2" fill="#2050e0"/><rect x="10" y="11" width="6" height="2.5" fill="#fff"/><rect x="11.5" y="14.5" width="3" height="2" fill="#fff"/></svg>
<svg class="a" style="left:879px;top:561px" width="19" height="17" viewBox="0 0 19 17"><defs><linearGradient id="pg1" x1="0" y1="0" x2="0" y2="1"><stop offset="0" stop-color="#f0f0f0"/><stop offset="1" stop-color="#a0a0a0"/></linearGradient></defs><path d="M4 0.5L11 0.5L14.5 6H5z" fill="#c8ecfa" stroke="#9a9a9a"/><path d="M6 2.5h5" stroke="#70c0e8"/><path d="M0.5 7.5Q1 5.5 3 5.5h13q2 0 2.5 2v5.5H0.5z" fill="url(#pg1)" stroke="#8a8a8a"/><path d="M2.5 13h14l-1.5 3.5H4z" fill="#dcdcdc" stroke="#8a8a8a"/><path d="M3 9h13" stroke="#fff" stroke-width=".8"/></svg>
<svg class="a" style="left:903px;top:561px" width="19" height="17" viewBox="0 0 19 17"><defs><linearGradient id="pg2" x1="0" y1="0" x2="0" y2="1"><stop offset="0" stop-color="#f0f0f0"/><stop offset="1" stop-color="#a0a0a0"/></linearGradient></defs><path d="M4 0.5L11 0.5L14.5 6H5z" fill="#c8ecfa" stroke="#9a9a9a"/><path d="M6 2.5h5" stroke="#70c0e8"/><path d="M0.5 7.5Q1 5.5 3 5.5h13q2 0 2.5 2v5.5H0.5z" fill="url(#pg2)" stroke="#8a8a8a"/><path d="M2.5 13h14l-1.5 3.5H4z" fill="#dcdcdc" stroke="#8a8a8a"/><path d="M3 9h13" stroke="#fff" stroke-width=".8"/><path d="M3 16L16.5 3" stroke="#b03040" stroke-width="1.5"/></svg>
<svg class="a" style="left:951px;top:561px" width="14" height="14" viewBox="0 0 14 14"><path d="M4 3.5Q8 0.5 11 3Q13.5 6 11 9.5Q9.5 11.5 7.5 12" fill="none" stroke="#3a8ae8" stroke-width="2.2"/><path d="M1 2.5L6.5 2L3 7.5z" fill="#2a78e0"/></svg>
<svg class="a" style="left:972px;top:560px" width="18" height="18" viewBox="0 0 18 18"><path d="M1.5 1L9 9.5M16.5 1L9 9.5" stroke="#303030" stroke-width="2.2"/><path d="M1.5 1L9 9.5M16.5 1L9 9.5" stroke="#e8e8e8" stroke-width="0.9"/><path d="M9 9.5L5.5 13M9 9.5L12.5 13" stroke="#1a2090" stroke-width="1.5"/><ellipse cx="4.5" cy="14.5" rx="3" ry="2.3" fill="none" stroke="#1a2090" stroke-width="1.6"/><ellipse cx="13.5" cy="14.5" rx="3" ry="2.3" fill="none" stroke="#1a2090" stroke-width="1.6"/></svg>
<svg class="a" style="left:995px;top:560px" width="17" height="18" viewBox="0 0 17 18"><path d="M0.5 0.5h6l3 3v8h-9z" fill="#fff" stroke="#000"/><path d="M5.5 4.5h6l3.5 3.5v9H5.5z" fill="#f8e8b0" stroke="#000"/><path d="M11.5 4.5v3.5h3.5" fill="none" stroke="#000" stroke-width=".8"/></svg>
<svg class="a" style="left:1017px;top:559px" width="20" height="20" viewBox="0 0 20 20"><rect x="0.5" y="2.5" width="11" height="13" fill="#fff" stroke="#000"/><rect x="3" y="0.5" width="6" height="3" rx="1" fill="#1a40e0"/><path d="M4 7l5 5" stroke="#1a2a90" stroke-width="1.8"/><path d="M6.5 12.5h3.5v-3.5" fill="#1a2a90" stroke="#1a2a90"/><path d="M9.5 8.5h6l3 3v8h-9z" fill="#f8e8b0" stroke="#000"/><path d="M11.5 13h5M11.5 15h5M11.5 17h5" stroke="#c0a060" stroke-width=".7"/></svg>
<svg class="a" style="left:1042px;top:562px" width="16" height="14" viewBox="0 0 16 14"><defs><linearGradient id="bn1" x1="0" y1="0" x2="1" y2="0"><stop offset="0" stop-color="#606060"/><stop offset=".5" stop-color="#e0e0e0"/><stop offset="1" stop-color="#707070"/></linearGradient></defs><rect x="2" y="0" width="4" height="4" fill="url(#bn1)"/><rect x="10" y="0" width="4" height="4" fill="url(#bn1)"/><rect x="0.5" y="4" width="6" height="9.5" rx="1" fill="url(#bn1)" stroke="#707070" stroke-width=".6"/><rect x="9.5" y="4" width="6" height="9.5" rx="1" fill="url(#bn1)" stroke="#707070" stroke-width=".6"/><rect x="6" y="5.5" width="4" height="3" fill="#909090"/></svg>
<svg class="a" style="left:1065px;top:560px" width="17" height="17" viewBox="0 0 17 17"><text x="0" y="9" font-size="10" font-weight="bold" font-family="Liberation Serif" fill="#4a4a40">a</text><text x="6" y="9" font-size="10" font-weight="bold" font-family="Liberation Serif" fill="#90a8b0">b</text><path d="M1 11v2h3" fill="none" stroke="#505060"/><text x="4.5" y="16.5" font-size="9" font-weight="bold" font-family="Liberation Sans" fill="#303028">a</text><text x="10" y="16.5" font-size="9" font-weight="bold" font-family="Liberation Sans" fill="#1a6a2a">c</text></svg>
<svg class="a" style="left:1088px;top:561px" width="16" height="16" viewBox="0 0 16 16"><text x="0" y="6.5" font-size="7" font-weight="bold" font-family="Liberation Mono" fill="#000" textLength="12" lengthAdjust="spacingAndGlyphs">ABC</text><path d="M1 10.5L5 15L15 3" fill="none" stroke="#1a1a80" stroke-width="1.3"/><path d="M1 10.5L5 15L7 12.5" fill="none" stroke="#1a1a80" stroke-width="2.4"/></svg>
<svg class="a" style="left:1133px;top:561px" width="18" height="16" viewBox="0 0 18 16"><rect x="1" y="5" width="12" height="10.5" fill="#fff" stroke="#000" stroke-width="1.4"/><rect x="2" y="6" width="10" height="2" fill="#40a0f0"/><path d="M1.5 11h11M5 8v7M9 8v7" stroke="#c0c0c0" stroke-width="1"/><path d="M5 7L10 2.5h6l0 4H10L8 8.5z" fill="#c8c8c8" stroke="#303030" stroke-width=".9"/><rect x="15" y="1" width="2.5" height="6" fill="#1a1a90"/></svg>
<svg class="a" style="left:305px;top:588px" width="17" height="15" viewBox="0 0 17 15"><rect x="0" y="0" width="3" height="3" fill="#2a7ae0"/><rect x="0" y="6" width="3" height="3" fill="#2a7ae0"/><rect x="0" y="12" width="3" height="3" fill="#2a7ae0"/><path d="M6 1h10M6 7.5h10M6 13.5h10" stroke="#3a4a2a" stroke-width="1.3"/></svg>
<svg class="a" style="left:329px;top:588px" width="15" height="15" viewBox="0 0 15 15"><path d="M0 1h14M6 5.5h8M6 9.5h8M0 13.5h14" stroke="#3a4a2a" stroke-width="1.3"/><path d="M5 7.5H0.5M2.5 5.5l-2 2 2 2" stroke="#2a7ae0" stroke-width="1.4" fill="none"/></svg>
<svg class="a" style="left:352px;top:588px" width="15" height="15" viewBox="0 0 15 15"><path d="M0 1h14M6 5.5h8M6 9.5h8M0 13.5h14" stroke="#3a4a2a" stroke-width="1.3"/><path d="M0 7.5H4.5M2.5 5.5l2 2-2 2" stroke="#2a7ae0" stroke-width="1.4" fill="none"/></svg>
<div class="a" style="left:303px;top:609px;width:897px;height:1px;background:#fbfbfb"></div>
<div class="a" style="left:303px;top:610px;width:897px;height:26px;background:#f3f3f3"></div>
<div class="a" style="left:751px;top:610px;width:1px;height:25px;background:#b0b0b0"></div>
<div class="a" style="left:752px;top:610px;width:1px;height:25px;background:#fff"></div>
<div class="t" style="left:310px;top:618px;font-size:11px;letter-spacing:-0.5px">CODE:</div>
<div class="a" style="left:351px;top:612px;width:297px;height:22px;border:1px solid #a0a0a0;background:#fff"></div>
<div class="t" style="left:354px;top:618px;font-size:11px;letter-spacing:-0.2px">Escape/Relax</div>
<div class="a" style="left:629px;top:614px;width:18px;height:19px;background:#dadada;border:1px solid #b8b8b8"></div>
<svg class="a" style="left:633px;top:621px" width="10" height="6" viewBox="0 0 10 6"><path d="M1 1L5 5L9 1" fill="none" stroke="#505050" stroke-width="1.2"/></svg>
<svg class="a" style="left:653px;top:614px" width="16" height="17" viewBox="0 0 16 17"><path d="M0.5 16.5L2 12L11 2.5L15 1L16 5L6 14.5Z" fill="#fafafa" stroke="#8a8a8a" stroke-width="1"/><path d="M4 12L12 4" stroke="#c0c0c0" stroke-width="1"/></svg>
<svg class="a" style="left:676px;top:612px" width="18" height="18" viewBox="0 0 18 18"><path d="M1.5 17.5L3 13L12 3.5L16 2L17 6L7 15.5Z" fill="#fafafa" stroke="#9a9a9a" stroke-width="1" stroke-dasharray="2 1"/><path d="M0.5 2h4M2.5 0v4M5 6l1.5 0" stroke="#a0a0a0" stroke-width="1"/></svg>
<svg class="a" style="left:701px;top:613px" width="18" height="18" viewBox="0 0 18 18"><path d="M1.5 17.5L3 13L12 3.5L16 2L17 6L7 15.5Z" fill="#2f8a3a" stroke="#1a4a20" stroke-width=".9"/><path d="M5 13L13 5" stroke="#b8e0c0" stroke-width="1.2"/><path d="M1 1L17 17M17 1L1 17" stroke="#e81010" stroke-width="2"/></svg>
<svg class="a" style="left:725px;top:614px" width="18" height="17" viewBox="0 0 18 17"><path d="M1 1h16v10H8l-4 4v-4H1z" fill="#a8a8a8" stroke="#989898"/></svg>
<svg class="a" style="left:766px;top:615px" width="13" height="13" viewBox="0 0 13 13"><polygon points="0.8,6.5 8,0 8,13" fill="#000"/><rect x="9.5" y="0" width="2.5" height="13" fill="#000"/></svg>
<svg class="a" style="left:793px;top:615px" width="8" height="13" viewBox="0 0 8 13"><polygon points="0.3,6.5 7.5,0 7.5,13" fill="#000"/></svg>
<svg class="a" style="left:818px;top:615px" width="8" height="13" viewBox="0 0 8 13"><polygon points="7.7,6.5 0.5,0 0.5,13" fill="#000"/></svg>
<svg class="a" style="left:839px;top:615px" width="12" height="13" viewBox="0 0 12 13"><rect x="0" y="0" width="2.5" height="13" fill="#000"/><polygon points="11.2,6.5 4,0 4,13" fill="#000"/></svg>
<div class="a" style="left:303px;top:635px;width:897px;height:1px;background:#8a8a8a"></div>
<div class="a" style="left:303px;top:636px;width:715px;height:25px;background:#f0f0f0"></div>
<div class="a" style="left:320px;top:640px;width:679px;height:15px;background:#fff"></div>
<div class="a" style="left:999px;top:640px;width:19px;height:15px;background:#ececec"></div>
<div class="a" style="left:303px;top:660px;width:715px;height:2px;background:#7a7a7a"></div>
<svg class="a" style="left:304px;top:637px" width="16" height="25" viewBox="0 0 16 25"><rect x="1.5" y="4.5" width="14" height="13" fill="#e4e4e4" stroke="#c8c8c8"/><rect x="1.5" y="0.5" width="10" height="2.5" fill="#d8d8d8" stroke="#204030"/><path d="M2 3h9L6.5 10 11 17H2L6.5 10z" fill="#c8c8c8" stroke="#000" stroke-width=".9"/><rect x="10" y="13.5" width="4" height="1.5" fill="#000"/><rect x="1.5" y="18.5" width="10" height="6" fill="#d0d0d0" stroke="#204030"/></svg>
<svg class="a" style="left:994px;top:637px" width="12" height="10" viewBox="0 0 12 10"><path d="M0.5 0.5h11v3L6 9 0.5 3.5z" fill="#c8c8c8" stroke="#204030"/></svg>
<div class="a" style="left:329px;top:643px;width:1px;height:6px;background:#000"></div>
<div class="a" style="left:338px;top:644px;width:1px;height:4px;background:#000"></div>
<div class="a" style="left:357px;top:644px;width:1px;height:4px;background:#000"></div>
<div class="a" style="left:367px;top:643px;width:1px;height:6px;background:#000"></div>
<div class="a" style="left:376px;top:644px;width:1px;height:4px;background:#000"></div>
<div class="t" style="left:337.8px;width:20px;text-align:center;top:643px;font-size:10px;color:#000">1</div>
<div class="a" style="left:395px;top:644px;width:1px;height:4px;background:#000"></div>
<div class="a" style="left:404px;top:643px;width:1px;height:6px;background:#000"></div>
<div class="a" style="left:414px;top:644px;width:1px;height:4px;background:#000"></div>
<div class="t" style="left:375.6px;width:20px;text-align:center;top:643px;font-size:10px;color:#000">2</div>
<div class="a" style="left:433px;top:644px;width:1px;height:4px;background:#000"></div>
<div class="a" style="left:442px;top:643px;width:1px;height:6px;background:#000"></div>
<div class="a" style="left:452px;top:644px;width:1px;height:4px;background:#000"></div>
<div class="t" style="left:413.4px;width:20px;text-align:center;top:643px;font-size:10px;color:#000">3</div>
<div class="a" style="left:471px;top:644px;width:1px;height:4px;background:#000"></div>
<div class="a" style="left:480px;top:643px;width:1px;height:6px;background:#000"></div>
<div class="a" style="left:490px;top:644px;width:1px;height:4px;background:#000"></div>
<div class="t" style="left:451.2px;width:20px;text-align:center;top:643px;font-size:10px;color:#000">4</div>
<div class="a" style="left:508px;top:644px;width:1px;height:4px;background:#000"></div>
<div class="a" style="left:518px;top:643px;width:1px;height:6px;background:#000"></div>
<div class="a" style="left:527px;top:644px;width:1px;height:4px;background:#000"></div>
<div class="t" style="left:489.0px;width:20px;text-align:center;top:643px;font-size:10px;color:#000">5</div>
<div class="a" style="left:546px;top:644px;width:1px;height:4px;background:#000"></div>
<div class="a" style="left:556px;top:643px;width:1px;height:6px;background:#000"></div>
<div class="a" style="left:565px;top:644px;width:1px;height:4px;background:#000"></div>
<div class="t" style="left:526.8px;width:20px;text-align:center;top:643px;font-size:10px;color:#000">6</div>
<div class="a" style="left:584px;top:644px;width:1px;height:4px;background:#000"></div>
<div class="a" style="left:594px;top:643px;width:1px;height:6px;background:#000"></div>
<div class="a" style="left:603px;top:644px;width:1px;height:4px;background:#000"></div>
<div class="t" style="left:564.6px;width:20px;text-align:center;top:643px;font-size:10px;color:#000">7</div>
<div class="a" style="left:622px;top:644px;width:1px;height:4px;background:#000"></div>
<div class="a" style="left:631px;top:643px;width:1px;height:6px;background:#000"></div>
<div class="a" style="left:641px;top:644px;width:1px;height:4px;background:#000"></div>
<div class="t" style="left:602.4px;width:20px;text-align:center;top:643px;font-size:10px;color:#000">8</div>
<div class="a" style="left:660px;top:644px;width:1px;height:4px;background:#000"></div>
<div class="a" style="left:669px;top:643px;width:1px;height:6px;background:#000"></div>
<div class="a" style="left:679px;top:644px;width:1px;height:4px;background:#000"></div>
<div class="t" style="left:640.2px;width:20px;text-align:center;top:643px;font-size:10px;color:#000">9</div>
<div class="a" style="left:697px;top:644px;width:1px;height:4px;background:#000"></div>
<div class="a" style="left:707px;top:643px;width:1px;height:6px;background:#000"></div>
<div class="a" style="left:716px;top:644px;width:1px;height:4px;background:#000"></div>
<div class="t" style="left:678.0px;width:20px;text-align:center;top:643px;font-size:10px;color:#000">10</div>
<div class="a" style="left:735px;top:644px;width:1px;height:4px;background:#000"></div>
<div class="a" style="left:745px;top:643px;width:1px;height:6px;background:#000"></div>
<div class="a" style="left:754px;top:644px;width:1px;height:4px;background:#000"></div>
<div class="t" style="left:715.8px;width:20px;text-align:center;top:643px;font-size:10px;color:#000">11</div>
<div class="a" style="left:773px;top:644px;width:1px;height:4px;background:#000"></div>
<div class="a" style="left:782px;top:643px;width:1px;height:6px;background:#000"></div>
<div class="a" style="left:792px;top:644px;width:1px;height:4px;background:#000"></div>
<div class="t" style="left:753.6px;width:20px;text-align:center;top:643px;font-size:10px;color:#000">12</div>
<div class="a" style="left:811px;top:644px;width:1px;height:4px;background:#000"></div>
<div class="a" style="left:820px;top:643px;width:1px;height:6px;background:#000"></div>
<div class="a" style="left:830px;top:644px;width:1px;height:4px;background:#000"></div>
<div class="t" style="left:791.4px;width:20px;text-align:center;top:643px;font-size:10px;color:#000">13</div>
<div class="a" style="left:849px;top:644px;width:1px;height:4px;background:#000"></div>
<div class="a" style="left:858px;top:643px;width:1px;height:6px;background:#000"></div>
<div class="a" style="left:868px;top:644px;width:1px;height:4px;background:#000"></div>
<div class="t" style="left:829.2px;width:20px;text-align:center;top:643px;font-size:10px;color:#000">14</div>
<div class="a" style="left:886px;top:644px;width:1px;height:4px;background:#000"></div>
<div class="a" style="left:896px;top:643px;width:1px;height:6px;background:#000"></div>
<div class="a" style="left:905px;top:644px;width:1px;height:4px;background:#000"></div>
<div class="t" style="left:867.0px;width:20px;text-align:center;top:643px;font-size:10px;color:#000">15</div>
<div class="a" style="left:924px;top:644px;width:1px;height:4px;background:#000"></div>
<div class="a" style="left:934px;top:643px;width:1px;height:6px;background:#000"></div>
<div class="a" style="left:943px;top:644px;width:1px;height:4px;background:#000"></div>
<div class="t" style="left:904.8px;width:20px;text-align:center;top:643px;font-size:10px;color:#000">16</div>
<div class="a" style="left:962px;top:644px;width:1px;height:4px;background:#000"></div>
<div class="a" style="left:972px;top:643px;width:1px;height:6px;background:#000"></div>
<div class="a" style="left:981px;top:644px;width:1px;height:4px;background:#000"></div>
<div class="t" style="left:942.6px;width:20px;text-align:center;top:643px;font-size:10px;color:#000">17</div>
<div class="t" style="left:980.4px;width:20px;text-align:center;top:643px;font-size:10px;color:#000">18</div>
<div class="a" style="left:303px;top:662px;width:715px;height:122px;border:1px solid #646464;background:#fff"></div>
<div class="t" style="left:310px;top:663px;font-size:14.67px;line-height:17px;color:#000;letter-spacing:0.045px">I think working well with others and understanding each persons roles based on abilities is something that</div>
<div class="t" style="left:310px;top:680px;font-size:14.67px;line-height:17px;color:#000;letter-spacing:0.13px">translates into any team environment.</div>
<div class="a" style="left:1018px;top:637px;width:5px;height:147px;background:linear-gradient(90deg,#f0f0f0,#e0e0e0 40%,#a8a8a8)"></div>
<div class="a" style="left:1019px;top:694px;width:2px;height:33px;background-image:linear-gradient(#202020 50%,transparent 50%);background-size:2px 4px;"></div>
<div class="a" style="left:1023px;top:637px;width:176px;height:147px;border-top:1px solid #646464;border-left:1px solid #646464;border-right:1px dotted #c0c0c0;border-bottom:1px dotted #c0c0c0;background:#fff"></div>
<div class="a" style="left:1029px;top:661px;width:6px;height:34px;border:3px solid #7a0f7a;border-left:none"></div>
<div class="t" style="left:1040px;top:672px;font-size:12px;color:#8a1a8a">Teamwork</div>
<div class="a" style="left:300px;top:417px;width:2px;height:35px;background-image:linear-gradient(#101010 50%,transparent 50%);background-size:2px 4px;"></div>
<div class="a" style="left:1px;top:784px;width:1199px;height:19px;background:#f0f0f0"></div>
<div class="a" style="left:1px;top:784px;width:1199px;height:1px;background:#d8d8d8"></div>
<div class="t" style="left:2px;top:787px;font-size:12px;letter-spacing:-0.4px">38 / 6048</div>
<div class="a" style="left:220px;top:785px;width:1px;height:17px;background:#d0d0d0"></div>
<div class="a" style="left:1101px;top:785px;width:1px;height:17px;background:#d0d0d0"></div>
<svg class="a" style="left:1188px;top:791px" width="10" height="10" viewBox="0 0 10 10"><rect x="6" y="0" width="2" height="2" fill="#909090"/><rect x="3" y="3" width="2" height="2" fill="#909090"/><rect x="6" y="3" width="2" height="2" fill="#909090"/><rect x="0" y="6" width="2" height="2" fill="#909090"/><rect x="3" y="6" width="2" height="2" fill="#909090"/><rect x="6" y="6" width="2" height="2" fill="#909090"/></svg>
</body></html>
